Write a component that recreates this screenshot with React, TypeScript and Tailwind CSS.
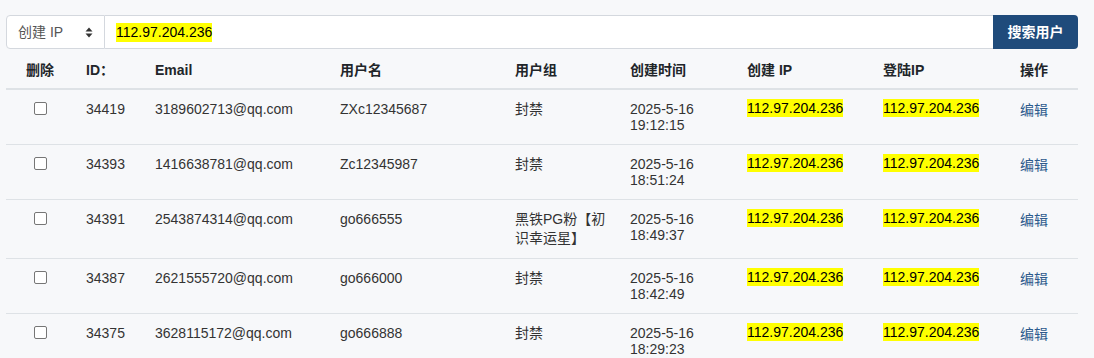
import React from 'react';

const FONT = "font-['Liberation_Sans','Noto_Sans_CJK_SC',sans-serif]";

const IP = '112.97.204.236';

const ROWS = [
  { id: '34419', email: '3189602713@qq.com', name: 'ZXc12345687', group: ['封禁'], date: '2025-5-16', time: '19:12:15' },
  { id: '34393', email: '1416638781@qq.com', name: 'Zc12345987', group: ['封禁'], date: '2025-5-16', time: '18:51:24' },
  { id: '34391', email: '2543874314@qq.com', name: 'go666555', group: ['黑铁PG粉【初', '识幸运星】'], date: '2025-5-16', time: '18:49:37' },
  { id: '34387', email: '2621555720@qq.com', name: 'go666000', group: ['封禁'], date: '2025-5-16', time: '18:42:49' },
  { id: '34375', email: '3628115172@qq.com', name: 'go666888', group: ['封禁'], date: '2025-5-16', time: '18:29:23' },
];

const HEADERS = ['删除', 'ID：', 'Email', '用户名', '用户组', '创建时间', '创建 IP', '登陆IP', '操作'];
const WIDTHS = ['w-[68px]', 'w-[69px]', 'w-[185px]', 'w-[175px]', 'w-[115px]', 'w-[117px]', 'w-[136px]', 'w-[137px]', 'w-[70px]'];

const Mark = () => (
  <mark className="bg-[#ffff00] text-black text-[14px] leading-[17px] px-0 py-[1px]">{IP}</mark>
);

export default function App() {
  return (
    <div className={`${FONT} bg-[#f7f8fa] w-[1094px] h-[358px] overflow-hidden px-[6px] pt-[15px] text-[#333] text-[14px]`}>
      {/* search bar */}
      <div className="flex h-[34px] w-[1072px]">
        <div className="w-[99px] flex items-center justify-between pl-[11px] pr-[11px] bg-white border border-[#d4d8de] rounded-l-[4px] text-[#555]">
          <span className="text-[14px]">创建 IP</span>
          <svg width="8" height="11" viewBox="0 0 8 11">
            <path d="M4 0.5 L7.5 4.5 L0.5 4.5 Z" fill="#333" />
            <path d="M4 10.5 L7.5 6.5 L0.5 6.5 Z" fill="#333" />
          </svg>
        </div>
        <div className="flex-1 flex items-center bg-white border-y border-[#d4d8de] pl-[11px]">
          <Mark />
        </div>
        <button className="w-[85px] bg-[#1f4b7b] text-white text-[14px] font-bold rounded-r-[4px]">搜索用户</button>
      </div>

      {/* table */}
      <table className="table-fixed border-collapse w-[1072px]">
        <colgroup>
          {WIDTHS.map((w, i) => <col key={i} className={w} />)}
        </colgroup>
        <thead>
          <tr className="border-b-2 border-[#dee2e6]">
            {HEADERS.map((h, i) => (
              <th
                key={h}
                className={`px-3 pt-[13px] pb-[10px] leading-4 font-bold text-[#212529] text-[14px] ${i === 0 ? 'text-center' : 'text-left'}`}
              >
                {h}
              </th>
            ))}
          </tr>
        </thead>
        <tbody>
          {ROWS.map((r) => (
            <tr key={r.id} className="border-b border-[#dee2e6] align-top">
              <td className="px-3 py-[11px] text-center">
                <input type="checkbox" className="w-[13px] h-[13px] mt-[1px] align-top appearance-none border border-[#767676] rounded-[2px] bg-white" />
              </td>
              <td className="px-3 py-[11px] leading-4">{r.id}</td>
              <td className="px-3 py-[11px] leading-4">{r.email}</td>
              <td className="px-3 py-[11px] leading-4">{r.name}</td>
              <td className="px-3 py-[10px] leading-[19px]">
                {r.group.map((g) => <div key={g}>{g}</div>)}
              </td>
              <td className="px-3 py-[11px] leading-4">
                <div>{r.date}</div>
                <div>{r.time}</div>
              </td>
              <td className="px-3 pt-[10px] pb-[11px] leading-[17px]"><Mark /></td>
              <td className="px-3 pt-[10px] pb-[11px] leading-[17px]"><Mark /></td>
              <td className="px-3 py-[12px] leading-4">
                <a className="text-[#2d5a8c]">编辑</a>
              </td>
            </tr>
          ))}
        </tbody>
      </table>
    </div>
  );
}
